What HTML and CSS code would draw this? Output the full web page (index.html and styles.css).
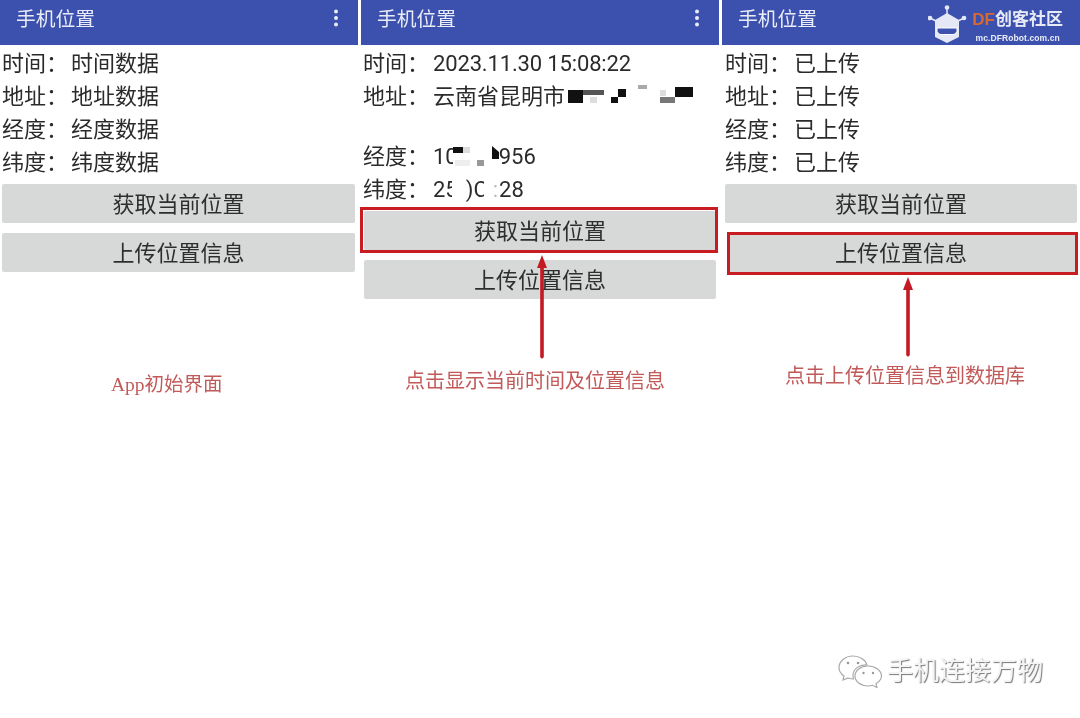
FILE: index.html
```html
<!DOCTYPE html>
<html lang="zh-CN">
<head>
<meta charset="utf-8">
<title>手机位置</title>
<link rel="stylesheet" href="styles.css">
</head>
<body>
<main class="page">
  <section class="phone phone-a">
    <header class="bar"><h1>手机位置</h1>
      <svg class="kebab" width="6" height="18" viewBox="0 0 6 18"><circle cx="3" cy="2.5" r="2"/><circle cx="3" cy="9" r="2"/><circle cx="3" cy="15.500" r="2"/></svg>
    </header>
    <div class="rows">
      <div class="row"><span class="key">时间：</span><span>时间数据</span></div>
      <div class="row"><span class="key">地址：</span><span>地址数据</span></div>
      <div class="row"><span class="key">经度：</span><span>经度数据</span></div>
      <div class="row"><span class="key">纬度：</span><span>纬度数据</span></div>
    </div>
    <div class="btns">
      <div class="btn">获取当前位置</div>
      <div class="btn">上传位置信息</div>
    </div>
  </section>

  <section class="phone phone-b">
    <header class="bar"><h1>手机位置</h1>
      <svg class="kebab" width="6" height="18" viewBox="0 0 6 18"><circle cx="3" cy="2.5" r="2"/><circle cx="3" cy="9" r="2"/><circle cx="3" cy="15.500" r="2"/></svg>
    </header>
    <div class="rows">
      <div class="row"><span class="key">时间：</span><span class="num">2023.11.30 15:08:22</span></div>
      <div class="row row-tall"><span class="key">地址：</span><span class="val">云南省昆明市<svg class="mosaic" width="128" height="24" viewBox="0 0 128 24"><rect x="0" y="5" width="15" height="13" fill="#111"/><rect x="15" y="5" width="21" height="5" fill="#555"/><rect x="22" y="12" width="7" height="6" fill="#ddd"/><rect x="43" y="12" width="7" height="6" fill="#111"/><rect x="50" y="4" width="8" height="8" fill="#111"/><rect x="70" y="0" width="9" height="4" fill="#aaa"/><rect x="92" y="5" width="6" height="6" fill="#ddd"/><rect x="92" y="12" width="15" height="6" fill="#777"/><rect x="107" y="2" width="18" height="10" fill="#111"/></svg></span></div>
      <div class="row"><span class="key">经度：</span><span class="val">10<svg class="mosaic mosaic-lon" width="46" height="24" viewBox="0 0 46 24"><rect x="0" y="0" width="46" height="24" fill="#fff"/><rect x="0" y="2" width="10" height="6" fill="#111"/><rect x="10" y="2" width="7" height="6" fill="#ddd"/><rect x="2" y="15" width="15" height="6" fill="#eee"/><rect x="24" y="15" width="7" height="6" fill="#999"/><polygon points="39,1 46,7 46,14 39,14" fill="#111"/></svg>956</span></div>
      <div class="row"><span class="key">纬度：</span><span class="val">25<svg class="cover cover-five" width="14" height="24" viewBox="0 0 14 24"><rect width="14" height="24" fill="#fff"/></svg>)C<svg class="cover cover-c" width="5" height="24" viewBox="0 0 5 24"><rect width="5" height="24" fill="#fff"/></svg><span class="faint">:</span>28</span></div>
    </div>
    <div class="btns">
      <div class="btn">获取当前位置</div>
      <div class="btn">上传位置信息</div>
    </div>
  </section>

  <section class="phone phone-c">
    <header class="bar"><h1>手机位置</h1>
      <div class="logo">
        <svg class="logo-mark" width="40" height="40" viewBox="0 0 40 40">
          <g stroke="#e4e7f6" stroke-width="1.5" fill="#e4e7f6">
            <line x1="19" y1="3" x2="19" y2="9"/><line x1="2" y1="13" x2="9" y2="16.500"/><line x1="36" y1="13" x2="29" y2="16.500"/>
            <circle cx="19" cy="2.500" r="1.600"/><circle cx="2" cy="13" r="1.600"/><circle cx="36" cy="13" r="1.600"/>
          </g>
          <path d="M19 8 L31 15 V32 L19 38 L7 32 V15 Z" fill="#e4e7f6"/>
          <path d="M9 23 H29 V27 L26 29.500 H12 L9 27 Z" fill="#3d50ae" stroke="#fff" stroke-width="1"/>
        </svg>
        <div class="logo-text">
          <div class="logo-name"><b>DF</b>创客社区</div>
          <div class="logo-url">mc.DFRobot.com.cn</div>
        </div>
      </div>
    </header>
    <div class="rows">
      <div class="row"><span class="key">时间：</span><span>已上传</span></div>
      <div class="row"><span class="key">地址：</span><span>已上传</span></div>
      <div class="row"><span class="key">经度：</span><span>已上传</span></div>
      <div class="row"><span class="key">纬度：</span><span>已上传</span></div>
    </div>
    <div class="btns">
      <div class="btn">获取当前位置</div>
      <div class="btn btn-inset">上传位置信息</div>
    </div>
  </section>

  <div class="callout callout-b"></div>
  <div class="callout callout-c"></div>
  <svg class="arrow arrow-b" width="12" height="104" viewBox="0 0 12 104"><path d="M6 0 L11 13 H7.800 V102 Q6 105 4.200 102 V13 H1 Z"/></svg>
  <svg class="arrow arrow-c" width="12" height="80" viewBox="0 0 12 80"><path d="M6 0 L11 13 H7.800 V78 Q6 81 4.200 78 V13 H1 Z"/></svg>
  <p class="note note-a">App初始界面</p>
  <p class="note note-b">点击显示当前时间及位置信息</p>
  <p class="note note-c">点击上传位置信息到数据库</p>

  <div class="mark">
    <svg width="46" height="34" viewBox="0 0 46 34" fill="#fff" stroke="#a9a9a9" stroke-width="1.2">
      <path d="M15 2 C7 2 1 7.500 1 13.500 C1 17 3 20 6 22 L5 26 L10 24 C12 24.600 13.500 25 15.500 25 C15 23.500 15 22.500 15 21.500 C15 15 21 10.500 29 11 C27.500 5.500 21.500 2 15 2 Z"/>
      <path d="M30 12 C22.500 12 17 16.500 17 22 C17 27.500 22.500 32 30 32 C31.500 32 33 31.800 34.500 31.300 L39 33.500 L38 29.800 C41.500 27.500 43.500 25 43.500 22 C43.500 16.500 37.500 12 30 12 Z"/>
      <circle cx="10" cy="9" r="1.300" fill="#999" stroke="none"/><circle cx="20" cy="9" r="1.300" fill="#999" stroke="none"/>
      <circle cx="25.500" cy="19" r="1.200" fill="#999" stroke="none"/><circle cx="35" cy="19" r="1.200" fill="#999" stroke="none"/>
    </svg>
    <span class="mark-text">手机连接万物</span>
  </div>
</main>
</body>
</html>
```

FILE: styles.css
```css
* { box-sizing: border-box; }
html, body { margin: 0; padding: 0; background: #fff; }
body { font-family: Roboto, "Noto Sans CJK SC", sans-serif; color: #2b2b2b; overflow: hidden; }

.page { position: relative; width: 1080px; height: 718px; display: flex; gap: 3px; background: #fff; filter: blur(0.3px); }
.phone { width: 358px; display: flex; flex-direction: column; }

.bar { height: 45px; background: #3c50ae; color: #e9ecf7; display: flex; align-items: center; justify-content: space-between; padding: 0 19px 6px 16px; }
.phone-c .bar { padding-right: 17px; }
.bar h1 { margin: 0; font-size: 19.75px; line-height: 28px; font-weight: 400; }
.kebab { fill: #e9ecf7; margin-bottom: 4px; }

.rows { padding: 2px 0 0 2px; }
.phone-c .rows { padding-left: 3px; }
.row { display: flex; height: 33px; font-size: 22px; line-height: 33px; white-space: nowrap; }
.row-tall { height: 60px; }
.key { width: 70px; flex: none; }
.phone-a .key, .phone-c .key { width: 69px; }
.num { letter-spacing: -0.15px; }
.val { display: flex; align-items: flex-start; }
.mosaic { flex: none; margin: 5px 0 0 3px; }
.mosaic-lon { margin-left: -5px; }
.cover { flex: none; margin-top: 5px; }
.cover-five { margin-left: -6px; }
.cover-c { margin-left: -4px; }
.faint { color: #bbb; margin: 0 1px 0 4px; }

.btns { display: flex; flex-direction: column; gap: 10px; padding: 5px 3px 0 2px; }
.phone-b .btns { padding: 5px 3px 0 3px; }
.phone-c .btns { padding: 5px 3px 0 3px; }
.btn { height: 39px; background: #d7d9d9; border-radius: 2px; font-size: 22px; line-height: 42px; text-align: center; color: #2e2e2e; }
.btn-inset { margin-left: 3px; text-indent: -3px; }

.callout { position: absolute; border: 3px solid #c81c23; }
.callout-b { left: 360px; top: 207px; width: 358px; height: 46px; }
.callout-c { left: 727px; top: 232px; width: 351px; height: 43px; }

.arrow { position: absolute; fill: #c41a24; }
.arrow-b { left: 536px; top: 255px; }
.arrow-c { left: 902px; top: 277px; }

.note { position: absolute; margin: 0; font-family: "Liberation Serif", "Noto Sans CJK SC", serif; font-size: 20px; line-height: 26px; color: #c25a5a; white-space: nowrap; }
.note-a { left: 111px; top: 372px; font-size: 19.5px; }
.note-b { left: 405px; top: 368px; }
.note-c { left: 785px; top: 363px; }

.mark { position: absolute; left: 838px; top: 654px; display: flex; align-items: center; gap: 3px; }
.mark-text { font-size: 26px; line-height: 34px; color: #f4f4f4; text-shadow: 1px 1px 1px #777; }

.logo { display: flex; align-items: center; gap: 4px; margin-top: 14px; }
.logo-mark { margin-top: -4px; }
.logo-text { display: flex; flex-direction: column; align-items: center; }
.logo-name { font-size: 17px; line-height: 22px; font-weight: 700; color: #e8ebf7; }
.logo-name b { color: #d8692f; font-family: "Liberation Sans", sans-serif; }
.logo-url { font-family: "Liberation Sans", sans-serif; font-size: 8.5px; line-height: 14px; font-weight: 700; letter-spacing: 0.1px; color: #e8ebf7; }
```
